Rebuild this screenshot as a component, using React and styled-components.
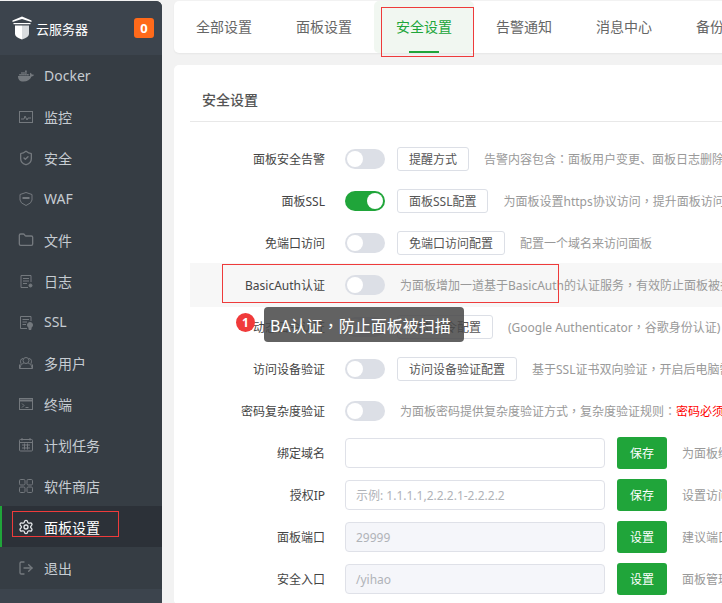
import React from "react";
import styled, { createGlobalStyle } from "styled-components";
import { FaDocker } from "react-icons/fa";
import {
  ShieldCheck,
  Folder,
  Settings,
  LogOut,
} from "lucide-react";

const fontStack = `"Noto Sans", "Noto Sans CJK SC", sans-serif`;

const GlobalStyle = createGlobalStyle`
  html, body {
    margin: 0;
    padding: 0;
    height: 100%;
    overflow: hidden;
    background: #f2f2f2;
    font-family: ${fontStack};
  }
  * { box-sizing: border-box; }
`;

const Page = styled.div`
  display: flex;
  width: 722px;
  height: 603px;
  overflow: hidden;
`;

// Sidebar
const Sidebar = styled.aside`
  width: 162px;
  flex: none;
  height: 602px;
  margin-top: 1px;
  display: flex;
  flex-direction: column;
  background: #363d44;
  border-top-right-radius: 6px;
  overflow: hidden;
`;

const Brand = styled.div`
  height: 54px;
  flex: none;
  display: flex;
  align-items: center;
  padding: 0 8px 0 12px;
  background: #3c444d;
  color: #fff;
  font-size: 13px;
`;

const BrandName = styled.span`
  margin-left: 4px;
  flex: 1;
`;

const Badge = styled.span`
  width: 20px;
  height: 20px;
  border-radius: 3px;
  background: #ff6a1a;
  color: #fff;
  font-size: 13px;
  font-weight: 700;
  display: flex;
  align-items: center;
  justify-content: center;
`;

const Nav = styled.nav`
  flex: 1;
`;

const NavItem = styled.div`
  position: relative;
  height: 41px;
  display: flex;
  align-items: center;
  gap: 10px;
  font-size: 14px;
  color: ${(p) => (p.$active ? "#fff" : "#c6ccd2")};
  background: ${(p) => (p.$active ? "#2c3138" : "transparent")};
  border-left: ${(p) => (p.$active ? "2px solid #20a53a" : "none")};
  padding-left: ${(p) => (p.$active ? "16px" : "18px")};

  svg {
    flex: none;
    width: 16px;
    height: 16px;
    color: ${(p) => (p.$active ? "#e4e7ea" : "#74797e")};
  }
`;

const SidebarFooter = styled.div`
  height: 14px;
  flex: none;
  background: #3c444d;
`;

const NavMark = styled.div`
  position: absolute;
  left: 10px;
  top: 5px;
  width: 107px;
  height: 26px;
  border: 1px solid #ee3b3b;
`;

// Main column
const Main = styled.main`
  flex: 1;
  min-width: 0;
  display: flex;
  flex-direction: column;
  gap: 12px;
  padding: 1px 0 0 12px;
`;

const TabCard = styled.div`
  height: 52px;
  flex: none;
  width: 620px;
  display: flex;
  background: #fff;
  border-radius: 5px;
  box-shadow: 0 1px 2px rgba(0, 0, 0, 0.05);
`;

const Tab = styled.div`
  position: relative;
  width: 100px;
  flex: none;
  display: flex;
  align-items: center;
  justify-content: center;
  padding-bottom: 2px;
  font-size: 14px;
  color: ${(p) => (p.$active ? "#20a53a" : "#666")};
  background: ${(p) => (p.$active ? "#f1f7f1" : "transparent")};
  border-radius: 5px;
`;

const TabBar = styled.span`
  position: absolute;
  left: 35px;
  bottom: 0;
  width: 30px;
  height: 2px;
  background: #20a53a;
`;

const TabMark = styled.span`
  position: absolute;
  left: 7px;
  top: 6px;
  width: 93px;
  height: 50px;
  border: 1px solid #ee3b3b;
`;

const Card = styled.section`
  width: 620px;
  height: 540px;
  flex: none;
  background: #fff;
  border-radius: 5px;
  padding: 0 16px;
`;

const CardTitle = styled.h2`
  margin: 0;
  height: 57px;
  padding: 11px 12px 0;
  display: flex;
  align-items: center;
  font-size: 14px;
  font-weight: 500;
  color: #555;
  border-bottom: 1px solid #e8e8e8;
`;

const Rows = styled.div`
  padding-top: 16px;
  display: flex;
  flex-direction: column;
`;

const Row = styled.div`
  position: relative;
  height: 42px;
  display: flex;
  align-items: center;
  white-space: nowrap;
  background: ${(p) => (p.$shaded ? "#f7f7f7" : "transparent")};
  box-shadow: ${(p) => (p.$shaded ? "0 -1px 0 #f7f7f7, 0 1px 0 #f7f7f7" : "none")};
`;

const Label = styled.div`
  width: 135px;
  flex: none;
  text-align: right;
  font-size: 12px;
  color: #444;
`;

const Switch = styled.span`
  position: relative;
  width: 40px;
  height: 20px;
  flex: none;
  margin-left: 20px;
  border-radius: 10px;
  background: ${(p) => (p.$on ? "#20a53a" : "#dcdfe6")};

  &::after {
    content: "";
    position: absolute;
    top: 2px;
    left: ${(p) => (p.$on ? "22px" : "2px")};
    width: 16px;
    height: 16px;
    border-radius: 50%;
    background: #fff;
  }
`;

const OutlineButton = styled.span`
  height: 24px;
  flex: none;
  margin-left: 12px;
  padding: 0 11px;
  display: flex;
  align-items: center;
  font-size: 12px;
  color: #555;
  background: #fff;
  border: 1px solid #dcdfe6;
  border-radius: 3px;
`;

const Hint = styled.span`
  margin-left: 15px;
  font-size: 12px;
  color: #999;
`;

const Danger = styled.span`
  color: #f00;
`;

// the reference centres its fullwidth comma and colon in the em box
const Punct = styled.span`
  font-family: "Noto Sans CJK TC", sans-serif;
`;

const Field = styled.div`
  width: 260px;
  height: 30px;
  flex: none;
  margin-left: 20px;
  padding: 0 10px;
  display: flex;
  align-items: center;
  font-size: 12px;
  color: #b0b3b8;
  background: ${(p) => (p.$disabled ? "#f5f6fa" : "#fff")};
  border: 1px solid #dfe1e8;
  border-radius: 4px;
`;

const SolidButton = styled.span`
  width: 50px;
  height: 32px;
  flex: none;
  margin-left: 12px;
  display: flex;
  align-items: center;
  justify-content: center;
  font-size: 12px;
  color: #fff;
  background: #20a53a;
  border-radius: 3px;
`;

const RowMark = styled.span`
  position: absolute;
  left: 32px;
  top: 0;
  width: 337px;
  height: 39px;
  border: 1px solid #ee3b3b;
`;

const Tip = styled.div`
  position: absolute;
  left: 74px;
  top: 43px;
  width: 200px;
  height: 35px;
  padding-left: 6px;
  display: flex;
  align-items: center;
  font-size: 16px;
  color: #fff;
  background: rgba(70, 70, 70, 0.85);
  border-radius: 4px;
  z-index: 2;
`;

const StepDot = styled.span`
  position: absolute;
  left: 46px;
  top: 49px;
  width: 19px;
  height: 19px;
  border-radius: 50%;
  background: #f03a3a;
  color: #fff;
  font-size: 12px;
  font-weight: 700;
  display: flex;
  align-items: center;
  justify-content: center;
  z-index: 3;
`;

const Logo = () => (
  <svg width="20" height="24" viewBox="0 0 20 24" style={{ flex: "none" }}>
    <path d="M0.5 4.5 L10 0.5 L19.5 4.5 L19.5 6 L10 3 L0.5 6 Z" fill="#fff" />
    <rect x="1.5" y="7" width="17" height="1.2" fill="#fff" />
    <path d="M3 9.5 H10 V23.5 Q3 21 3 18 Z" fill="#fff" />
    <path d="M10 9.5 H17 V18 Q17 21 10 23.5 Z" fill="#d9dcdf" />
  </svg>
);

const iconProps = { viewBox: "0 0 16 16", fill: "none", stroke: "currentColor", strokeWidth: 1 };

const MonitorIcon = () => (
  <svg {...iconProps}>
    <rect x="1.5" y="2.5" width="13" height="11" />
    <path d="M3 10 L6 10 L7 7 L9 11 L10 9 L13 9" />
  </svg>
);

const WafIcon = () => (
  <svg {...iconProps}>
    <path d="M8 1.5 L14 3.5 V9 Q14 12 8 14.5 Q2 12 2 9 V3.5 Z" />
    <path d="M4.5 6 H11.5 V8 H4.5 Z" fill="currentColor" stroke="none" />
  </svg>
);

const LogIcon = () => (
  <svg {...iconProps}>
    <path d="M13 9 V2.5 H3 V14.5 H10" />
    <path d="M5 5.5 H11 M5 8 H11 M5 10.5 H9" />
    <circle cx="12.5" cy="12.5" r="1.5" fill="currentColor" />
  </svg>
);

const SslIcon = () => (
  <svg {...iconProps}>
    <path d="M13 7 V2.5 H2.5 V14.5 H9" />
    <path d="M4.5 5.5 H11 M4.5 8 H9 M4.5 10.5 H8" />
    <circle cx="12" cy="11" r="2.5" fill="currentColor" />
    <path d="M11 13 V15.5 H13 V13" fill="currentColor" />
  </svg>
);

const UsersIcon = () => (
  <svg {...iconProps}>
    <circle cx="8" cy="5.5" r="3" />
    <path d="M2 13.5 C2 9.5 5 8.5 6 8 M14 13.5 C14 9.5 11 8.5 10 8" />
    <path d="M5 3.5 C2.5 3.5 2 6.5 3 8.5 L1.5 10 V13.5 H14.5 V10 L13 8.5 C14 6.5 13.5 3.5 11 3.5" />
  </svg>
);

const TerminalIcon = () => (
  <svg {...iconProps}>
    <rect x="1.5" y="2.5" width="13" height="11" />
    <path d="M1.5 4.5 H14.5" strokeWidth="2" />
    <path d="M4 7.5 L6 9.5 L4 11.5 M7.5 11.5 H10.5" />
  </svg>
);

const CalendarIcon = () => (
  <svg {...iconProps}>
    <rect x="1.5" y="2.5" width="13" height="11.5" rx="1" />
    <path d="M1.5 5.5 H14.5 M4 1 V3.5 M12 1 V3.5" />
    <path d="M4 8 H12 M4 11 H12 M6.5 6.5 V12.5 M9.5 6.5 V12.5" />
  </svg>
);

const StoreIcon = () => (
  <svg {...iconProps}>
    <rect x="1.5" y="1.5" width="5.5" height="5.5" rx="1.2" />
    <rect x="9" y="1.5" width="5.5" height="5.5" rx="1.2" />
    <rect x="1.5" y="9" width="5.5" height="5.5" rx="1.2" />
    <rect x="9" y="9" width="5.5" height="5.5" rx="1.2" />
  </svg>
);

const navItems = [
  { title: "Docker", Icon: FaDocker },
  { title: "监控", Icon: MonitorIcon },
  { title: "安全", Icon: ShieldCheck },
  { title: "WAF", Icon: WafIcon },
  { title: "文件", Icon: Folder },
  { title: "日志", Icon: LogIcon },
  { title: "SSL", Icon: SslIcon },
  { title: "多用户", Icon: UsersIcon },
  { title: "终端", Icon: TerminalIcon },
  { title: "计划任务", Icon: CalendarIcon },
  { title: "软件商店", Icon: StoreIcon },
  { title: "面板设置", Icon: Settings, active: true },
  { title: "退出", Icon: LogOut },
];

const tabs = ["全部设置", "面板设置", "安全设置", "告警通知", "消息中心", "备份设置"];

function App() {
  return (
    <Page>
      <GlobalStyle />
      <Sidebar>
        <Brand>
          <Logo />
          <BrandName>云服务器</BrandName>
          <Badge>0</Badge>
        </Brand>
        <Nav>
          {navItems.map(({ title, Icon, active }) => (
            <NavItem key={title} $active={active}>
              <Icon />
              {title}
              {active && <NavMark />}
            </NavItem>
          ))}
        </Nav>
        <SidebarFooter />
      </Sidebar>

      <Main>
        <TabCard>
          {tabs.map((tab) => (
            <Tab key={tab} $active={tab === "安全设置"}>
              {tab}
              {tab === "安全设置" && (
                <>
                  <TabBar />
                  <TabMark />
                </>
              )}
            </Tab>
          ))}
        </TabCard>

        <Card>
          <CardTitle>安全设置</CardTitle>
          <Rows>
            <Row>
              <Label>面板安全告警</Label>
              <Switch />
              <OutlineButton>提醒方式</OutlineButton>
              <Hint>告警内容包含<Punct>：</Punct>面板用户变更、面板日志删除、面板开启开发者</Hint>
            </Row>
            <Row>
              <Label>面板SSL</Label>
              <Switch $on />
              <OutlineButton>面板SSL配置</OutlineButton>
              <Hint>为面板设置https协议访问<Punct>，</Punct>提升面板访问安全性</Hint>
            </Row>
            <Row>
              <Label>免端口访问</Label>
              <Switch />
              <OutlineButton>免端口访问配置</OutlineButton>
              <Hint>配置一个域名来访问面板</Hint>
            </Row>
            <Row $shaded>
              <Label>BasicAuth认证</Label>
              <Switch />
              <Hint>为面板增加一道基于BasicAuth的认证服务<Punct>，</Punct>有效防止面板被扫描</Hint>
              <RowMark />
              <StepDot>1</StepDot>
              <Tip>BA认证<Punct>，</Punct>防止面板被扫描</Tip>
            </Row>
            <Row>
              <Label>动态口令认证</Label>
              <Switch />
              <OutlineButton>动态口令配置</OutlineButton>
              <Hint>(Google Authenticator<Punct>，</Punct>谷歌身份认证)</Hint>
            </Row>
            <Row>
              <Label>访问设备验证</Label>
              <Switch />
              <OutlineButton>访问设备验证配置</OutlineButton>
              <Hint>基于SSL证书双向验证<Punct>，</Punct>开启后电脑需安装证书</Hint>
            </Row>
            <Row>
              <Label>密码复杂度验证</Label>
              <Switch />
              <Hint>
                为面板密码提供复杂度验证方式<Punct>，</Punct>复杂度验证规则<Punct>：</Punct><Danger>密码必须</Danger>
              </Hint>
            </Row>
            <Row>
              <Label>绑定域名</Label>
              <Field />
              <SolidButton>保存</SolidButton>
              <Hint>为面板绑定一个域名</Hint>
            </Row>
            <Row>
              <Label>授权IP</Label>
              <Field>示例: 1.1.1.1,2.2.2.1-2.2.2.2</Field>
              <SolidButton>保存</SolidButton>
              <Hint>设置访问面板的IP</Hint>
            </Row>
            <Row>
              <Label>面板端口</Label>
              <Field $disabled>29999</Field>
              <SolidButton>设置</SolidButton>
              <Hint>建议端口范围</Hint>
            </Row>
            <Row>
              <Label>安全入口</Label>
              <Field $disabled>/yihao</Field>
              <SolidButton>设置</SolidButton>
              <Hint>面板管理入口</Hint>
            </Row>
          </Rows>
        </Card>
      </Main>
    </Page>
  );
}

export default App;
